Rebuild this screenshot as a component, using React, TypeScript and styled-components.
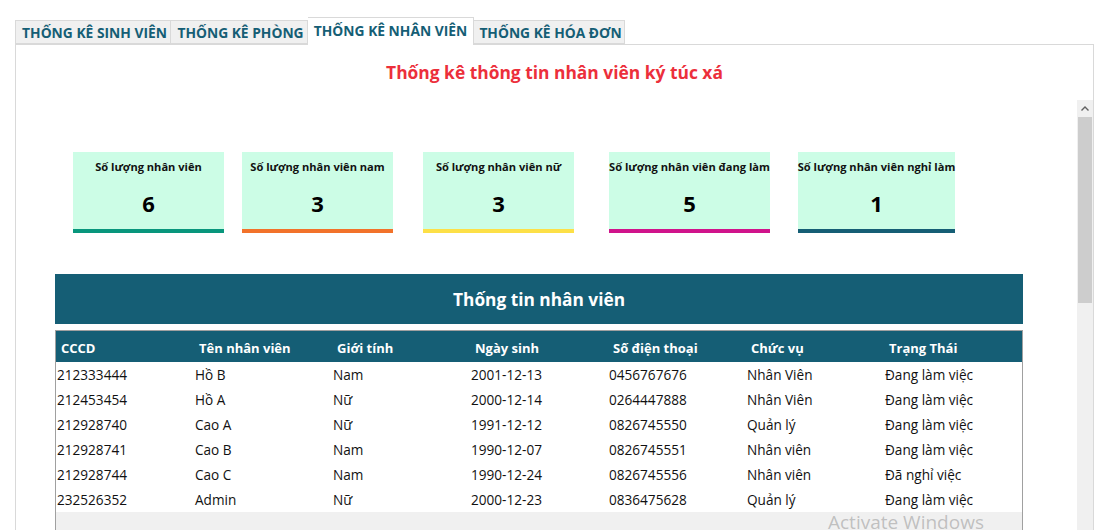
import React from "react";
import styled, { createGlobalStyle } from "styled-components";

const GlobalStyle = createGlobalStyle`
  html, body { margin: 0; padding: 0; background: #ffffff; }
  body { font-family: "Open Sans", "Noto Sans", sans-serif; overflow: hidden; height: 530px; }
  * { box-sizing: border-box; }
`;

const TEAL = "#155e75";

const Page = styled.div`
  position: relative;
  height: 530px;
  padding: 17px 16px 0 15px;
  overflow: hidden;
`;

const TabStrip = styled.div`
  display: flex;
  align-items: flex-end;
  height: 27px;
  position: relative;
  z-index: 2;
`;

const Tab = styled.div<{ $w: number; $active?: boolean }>`
  width: ${(p) => p.$w}px;
  height: ${(p) => (p.$active ? 28 : 24)}px;
  margin-bottom: ${(p) => (p.$active ? -1 : 0)}px;
  background: ${(p) => (p.$active ? "#ffffff" : "#f0f0f0")};
  border: 1px solid #d9d9d9;
  border-bottom: ${(p) => (p.$active ? "none" : "1px solid #d9d9d9")};
  display: flex;
  align-items: center;
  justify-content: center;
  padding-left: ${(p) => (p.$active ? 0 : 3)}px;
  padding-bottom: ${(p) => (p.$active ? 2 : 0)}px;
  color: ${TEAL};
  font-weight: 700;
  font-size: 13.8px;
  white-space: nowrap;
  & + & { border-left: ${(p) => (p.$active ? "1px solid #d9d9d9" : "none")}; }
`;

const TabPanel = styled.div`
  border: 1px solid #d9d9d9;
  height: 520px;
  display: flex;
  flex-direction: column;
`;

const Title = styled.div`
  height: 55px;
  display: flex;
  align-items: center;
  justify-content: center;
  padding-bottom: 1px;
  color: #ec2f3b;
  font-weight: 700;
  font-size: 17.4px;
`;

const ScrollArea = styled.div`
  flex: 1;
  display: flex;
  min-height: 0;
`;

const ScrollContent = styled.div`
  flex: 1;
  overflow: hidden;
`;

const ScrollBar = styled.div`
  width: 16px;
  display: flex;
  flex-direction: column;
  background: #f0f0f0;
`;

const ScrollArrow = styled.div`
  height: 17px;
  display: flex;
  align-items: center;
  justify-content: center;
`;

const ScrollThumb = styled.div`
  height: 186px;
  margin: 0 1px;
  background: #cdcdcd;
`;

const Cards = styled.div`
  display: flex;
  padding: 52px 0 0 57px;
`;

const Card = styled.div<{ $w: number; $ml: number; $stripe: string }>`
  width: ${(p) => p.$w}px;
  margin-left: ${(p) => p.$ml}px;
  height: 81px;
  background: #ccfde6;
  border-bottom: 4px solid ${(p) => p.$stripe};
  display: flex;
  flex-direction: column;
  align-items: center;
  padding-top: 7px;
`;

const CardLabel = styled.div`
  font-size: 11.1px;
  font-weight: 700;
  color: #111;
  line-height: 16px;
  white-space: nowrap;
  display: flex;
  justify-content: center;
  width: 100%;
`;

const CardValue = styled.div`
  margin-top: 13px;
  font-size: 22px;
  font-weight: 700;
  color: #000;
  line-height: 30px;
`;

const Section = styled.div`
  margin: 41px 0 0 39px;
  width: 968px;
`;

const Banner = styled.div`
  height: 50px;
  background: ${TEAL};
  color: #fff;
  font-size: 17.3px;
  font-weight: 700;
  display: flex;
  align-items: center;
  justify-content: center;
  padding-top: 1px;
`;

const Grid = styled.div`
  margin-top: 6px;
  border: 1px solid #a0a0a0;
  border-bottom: none;
  background: #f0f0f0;
  height: 220px;
`;

const Row = styled.div<{ $head?: boolean }>`
  display: grid;
  grid-template-columns: repeat(7, 138px);
  height: ${(p) => (p.$head ? 31 : 25)}px;
  padding-top: ${(p) => (p.$head ? 2 : 0)}px;
  align-items: center;
  background: ${(p) => (p.$head ? TEAL : "#ffffff")};
  color: ${(p) => (p.$head ? "#ffffff" : "#111111")};
  font-weight: ${(p) => (p.$head ? 700 : 400)};
  font-size: ${(p) => (p.$head ? 13 : 13.6)}px;
`;

const Cell = styled.div<{ $head?: boolean }>`
  padding-left: ${(p) => (p.$head ? 5 : 1)}px;
  white-space: nowrap;
  overflow: hidden;
`;

const Watermark = styled.div`
  position: absolute;
  left: 828px;
  top: 510px;
  font-size: 19px;
  line-height: 24px;
  color: rgba(150, 150, 150, 0.55);
  font-weight: 400;
  pointer-events: none;
  z-index: 5;
`;

const tabs = [
  { label: "THỐNG KÊ SINH VIÊN", w: 156 },
  { label: "THỐNG KÊ PHÒNG", w: 137 },
  { label: "THỐNG KÊ NHÂN VIÊN", w: 166, active: true },
  { label: "THỐNG KÊ HÓA ĐƠN", w: 151 },
];

const cards = [
  { label: "Số lượng nhân viên", value: 6, w: 151, ml: 0, stripe: "#08967c" },
  { label: "Số lượng nhân viên nam", value: 3, w: 151, ml: 18, stripe: "#f2722a" },
  { label: "Số lượng nhân viên nữ", value: 3, w: 151, ml: 30, stripe: "#fde047" },
  { label: "Số lượng nhân viên đang làm", value: 5, w: 161, ml: 35, stripe: "#d0138b" },
  { label: "Số lượng nhân viên nghỉ làm", value: 1, w: 157, ml: 28, stripe: TEAL },
];

const headers = ["CCCD", "Tên nhân viên", "Giới tính", "Ngày sinh", "Số điện thoại", "Chức vụ", "Trạng Thái"];

const rows = [
  ["212333444", "Hồ B", "Nam", "2001-12-13", "0456767676", "Nhân Viên", "Đang làm việc"],
  ["212453454", "Hồ A", "Nữ", "2000-12-14", "0264447888", "Nhân Viên", "Đang làm việc"],
  ["212928740", "Cao A", "Nữ", "1991-12-12", "0826745550", "Quản lý", "Đang làm việc"],
  ["212928741", "Cao B", "Nam", "1990-12-07", "0826745551", "Nhân viên", "Đang làm việc"],
  ["212928744", "Cao C", "Nam", "1990-12-24", "0826745556", "Nhân viên", "Đã nghỉ việc"],
  ["232526352", "Admin", "Nữ", "2000-12-23", "0836475628", "Quản lý", "Đang làm việc"],
];

export default function App() {
  return (
    <>
      <GlobalStyle />
      <Page>
        <TabStrip>
          {tabs.map((t) => (
            <Tab key={t.label} $w={t.w} $active={t.active}>
              {t.label}
            </Tab>
          ))}
        </TabStrip>
        <TabPanel>
          <Title>Thống kê thông tin nhân viên ký túc xá</Title>
          <ScrollArea>
            <ScrollContent>
              <Cards>
                {cards.map((c) => (
                  <Card key={c.label} $w={c.w} $ml={c.ml} $stripe={c.stripe}>
                    <CardLabel>{c.label}</CardLabel>
                    <CardValue>{c.value}</CardValue>
                  </Card>
                ))}
              </Cards>
              <Section>
                <Banner>Thống tin nhân viên</Banner>
                <Grid>
                  <Row $head>
                    {headers.map((h) => (
                      <Cell key={h} $head>{h}</Cell>
                    ))}
                  </Row>
                  {rows.map((r) => (
                    <Row key={r[0]}>
                      {r.map((v, i) => (
                        <Cell key={i}>{v}</Cell>
                      ))}
                    </Row>
                  ))}
                </Grid>
              </Section>
            </ScrollContent>
            <ScrollBar>
              <ScrollArrow>
                <svg width="8" height="5" viewBox="0 0 8 5">
                  <path d="M0.5 4.5 L4 1 L7.5 4.5" fill="none" stroke="#606060" strokeWidth="1.4" />
                </svg>
              </ScrollArrow>
              <ScrollThumb />
            </ScrollBar>
          </ScrollArea>
        </TabPanel>
        <Watermark>Activate Windows</Watermark>
      </Page>
    </>
  );
}
